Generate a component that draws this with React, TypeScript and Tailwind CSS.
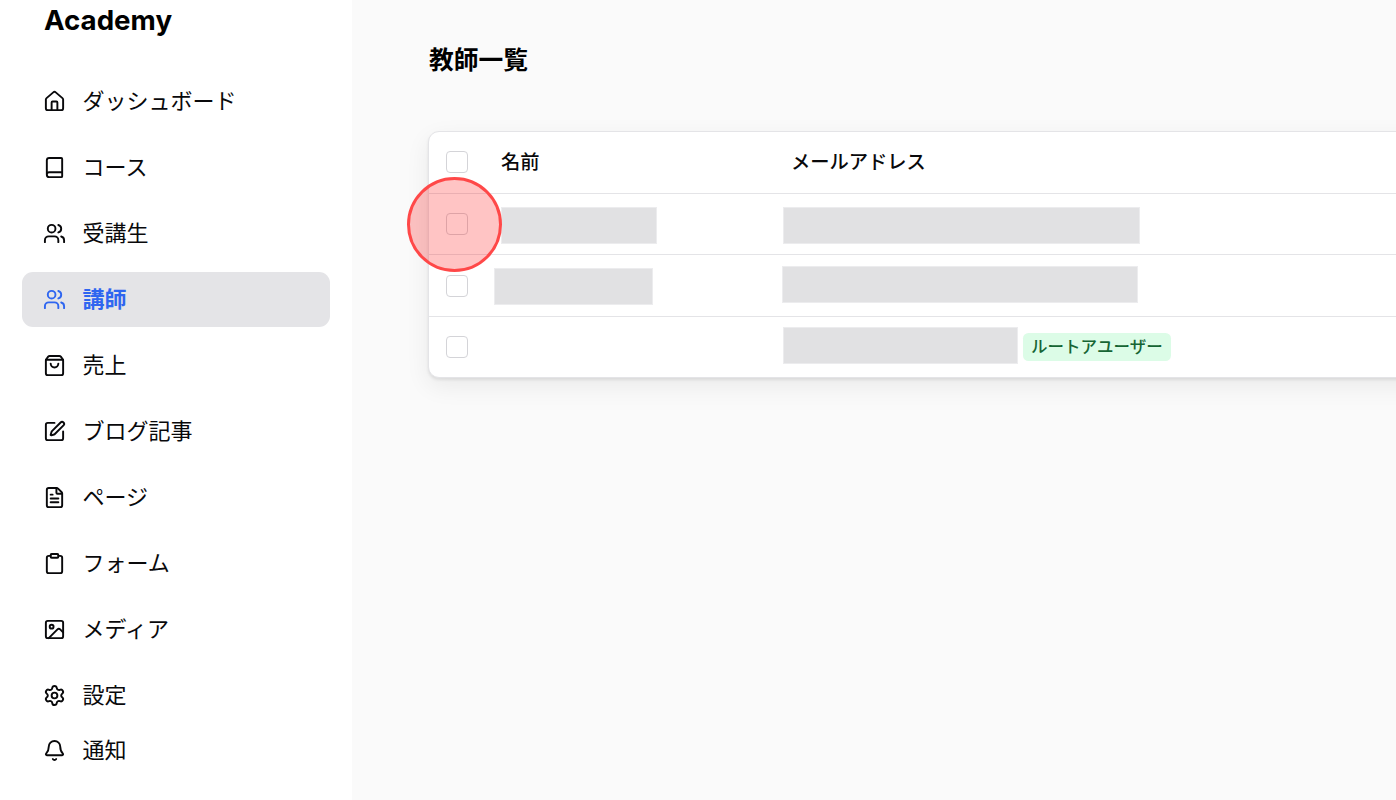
import { Home, Book, Users, ShoppingBag, SquarePen, FileText, Clipboard, Image, Settings, Bell } from "lucide-react";

const NAV_ITEMS = [
  { label: "ダッシュボード", icon: Home },
  { label: "コース", icon: Book },
  { label: "受講生", icon: Users },
  { label: "講師", icon: Users, active: true },
  { label: "売上", icon: ShoppingBag },
  { label: "ブログ記事", icon: SquarePen },
  { label: "ページ", icon: FileText },
  { label: "フォーム", icon: Clipboard },
  { label: "メディア", icon: Image },
  { label: "設定", icon: Settings },
];

function Checkbox({ className = "" }: { className?: string }) {
  return <div className={`h-[22px] w-[22px] shrink-0 rounded-[4px] border border-[#d4d4d8] bg-white ${className}`} />;
}

function Redacted({ className }: { className: string }) {
  return <div className={`h-[37px] shrink-0 self-start border border-[#ececee] bg-[#e1e1e3] ${className}`} />;
}

export default function App() {
  return (
    <div className="flex h-[800px] w-[1396px] overflow-hidden bg-[#fafafa] text-[#09090b] [font-family:Inter,'Noto_Sans_CJK_JP',sans-serif]">
      <aside className="flex w-[352px] shrink-0 flex-col bg-white px-[22px]">
        <div className="mt-[3px] h-[35px] px-[22px] text-[27.7px] leading-[35px] font-bold text-black">Academy</div>
        <nav className="mt-[36px] flex flex-col gap-[11px]">
          {NAV_ITEMS.map((item) => {
            const Icon = item.icon;
            return (
              <div
                key={item.label}
                className={`flex h-[55px] items-center gap-[16.5px] rounded-[11px] pl-[21px] text-[22px] ${
                  item.active ? "bg-[#e4e4e7] font-semibold text-[#2f66f0]" : ""
                }`}
              >
                <Icon size={23} strokeWidth={2} className="shrink-0" />
                <span>{item.label}</span>
              </div>
            );
          })}
          <div className="-mt-[11px] flex h-[55px] items-center gap-[16.5px] rounded-[11px] pl-[21px] text-[22px]">
            <Bell size={23} strokeWidth={2} className="shrink-0" />
            <span>通知</span>
          </div>
        </nav>
      </aside>

      <main className="relative min-w-0 flex-1 pl-[77px]">
        <h1 className="mt-[43px] h-[34px] text-[24.75px] leading-[34px] font-semibold text-black">教師一覧</h1>

        <div className="mt-[54px] -ml-px w-[1200px] rounded-[11px] border border-[#e4e4e7] bg-white shadow-[0_2px_3px_rgba(0,0,0,0.08),0_8px_24px_rgba(0,0,0,0.07)]">
          <div className="flex h-[61px] items-center pl-[17px] text-[19.25px] font-medium">
            <Checkbox className="mb-[2px]" />
            <span className="ml-[33px] w-[290px]">名前</span>
            <span>メールアドレス</span>
          </div>

          <div className="flex h-[61px] items-center border-t border-[#e4e4e7] pl-[17px]">
            <Checkbox />
            <Redacted className="mt-[13px] ml-[33px] w-[156px]" />
            <Redacted className="mt-[13px] ml-[126px] w-[357px]" />
          </div>

          <div className="flex h-[62px] items-center border-t border-[#e4e4e7] pl-[17px]">
            <Checkbox />
            <Redacted className="mt-[13px] ml-[26px] w-[159px]" />
            <Redacted className="mt-[11px] ml-[129px] w-[356px]" />
          </div>

          <div className="flex h-[61px] items-center border-t border-[#e4e4e7] pl-[17px]">
            <Checkbox />
            <Redacted className="mt-[10px] ml-[315px] w-[235px]" />
            <span className="ml-[5px] flex h-[28px] items-center rounded-[5.5px] bg-[#dcfce7] px-[8px] text-[16.5px] font-medium text-[#166534]">
              ルートアユーザー
            </span>
          </div>
        </div>

        <div className="absolute top-[177px] left-[54.5px] h-[95px] w-[95px] rounded-full border-[3px] border-[#ff4848] bg-[#ff0000]/[0.23]" />
      </main>
    </div>
  );
}
